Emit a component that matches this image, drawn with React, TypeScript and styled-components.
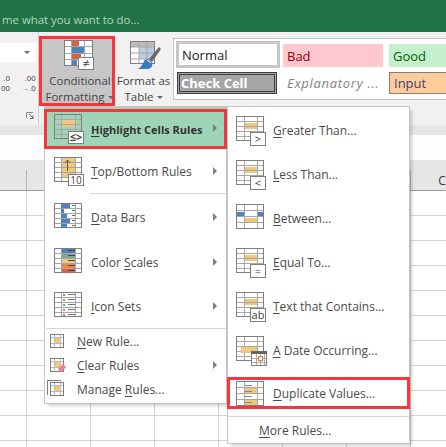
import React from 'react';
import styled, { createGlobalStyle } from 'styled-components';

const GlobalStyle = createGlobalStyle`
  html, body { margin: 0; padding: 0; background: #fff; }
  body { font-family: "Open Sans", "Noto Sans", "Liberation Sans", sans-serif; }
`;

const red = '#f9343c';
const gridLine = '#7f7f7f';
const cellLine = '#a6a6a6';
const amber = '#efc77d';
const blue = '#4f81bd';

const Page = styled.div`
  position: relative;
  width: 446px;
  height: 447px;
  overflow: hidden;
  display: flex;
  flex-direction: column;
`;

const TitleBar = styled.div`
  height: 32px;
  flex: none;
  background: #217346;
  color: #b4d6c3;
  font-size: 11.4px;
  line-height: 40px;
  padding-left: 2px;
  white-space: nowrap;
`;

const Ribbon = styled.div`
  height: 93px;
  flex: none;
  display: flex;
  background: #f1f1f1;
  overflow: hidden;
`;

const NumberGroup = styled.div`
  width: 39px;
  flex: none;
  border-right: 1px solid #cfcfcf;
  display: flex;
  flex-direction: column;
  padding-top: 11px;
  box-sizing: border-box;
`;

const FormatSelect = styled.div`
  width: 36px;
  height: 19px;
  background: #fff;
  display: flex;
  align-items: center;
  justify-content: flex-end;
  padding-right: 6px;
  box-sizing: border-box;
`;

const Caret = styled.span`
  display: inline-block;
  width: 0;
  height: 0;
  border-left: 3px solid transparent;
  border-right: 3px solid transparent;
  border-top: 3px solid #666;
`;

const Decimals = styled.div`
  display: flex;
  gap: 11px;
  margin-top: 12px;
  padding-left: 1px;
`;

const DecimalStack = styled.div`
  display: flex;
  flex-direction: column;
  align-items: flex-end;
  font-family: "Liberation Sans", sans-serif;
  font-size: 8px;
  line-height: 10px;
  color: #444;
  white-space: nowrap;
`;

const DecimalArrow = styled.span`
  color: #2e75b6;
`;

const Launcher = styled.svg`
  margin: auto 4px 6px auto;
`;

const RibbonButton = styled.div<{ $active?: boolean; $width: number }>`
  position: relative;
  width: ${p => p.$width}px;
  height: 70px;
  margin-top: 4px;
  flex: none;
  box-sizing: border-box;
  background: ${p => (p.$active ? '#c6c6c6' : 'transparent')};
  border: ${p => (p.$active ? `3px solid ${red}` : '0')};
  display: flex;
  flex-direction: column;
  align-items: center;
  color: #444;
  font-size: 11.5px;
  line-height: 16px;
  white-space: nowrap;
`;

const RibbonIcon = styled.svg<{ $top: number; $left: number }>`
  margin: ${p => p.$top}px 0 0 ${p => p.$left}px;
  flex: none;
`;

const RibbonLabel = styled.div<{ $top?: number; $left?: number }>`
  display: flex;
  align-items: center;
  gap: 3px;
  margin-top: ${p => p.$top || 0}px;
  margin-left: ${p => p.$left || 0}px;
`;

const Gallery = styled.div`
  width: 280px;
  height: 62px;
  margin: 6px 0 0 1px;
  flex: none;
  box-sizing: border-box;
  background: #fff;
  border: 1px solid #c4c4c4;
  padding: 2px 0 0 2px;
  display: grid;
  grid-template-columns: 104px 103px 70px;
  grid-template-rows: 27px 22px;
  column-gap: 3px;
  row-gap: 4px;
`;

const styleTones = {
  normal: 'background:#fff;border:3px solid #c6c6c6;color:#222;padding-left:3px;',
  bad: 'background:#ffc7ce;color:#9c0006;margin:3px 3px 1px 0;padding-left:4px;',
  good: 'background:#c6efce;color:#006100;margin:3px 0 1px 0;padding-left:4px;',
  check: 'background:#a5a5a5;border:3px double #3f3f3f;color:#fff;font-weight:700;margin:0 3px 0 1px;padding-left:1px;',
  note: 'color:#7f7f7f;font-style:italic;padding-left:4px;letter-spacing:.7px;',
  input: 'background:#fc9;border:1px solid #7f7f7f;color:#3f3f76;padding-left:4px;',
};

const StyleCell = styled.div<{ $tone: keyof typeof styleTones }>`
  box-sizing: border-box;
  display: flex;
  align-items: center;
  font-size: 13px;
  white-space: nowrap;
  overflow: hidden;
  ${p => styleTones[p.$tone]}
`;

const Band = styled.div`
  height: 10px;
  flex: none;
  background: #e6e6e6;
`;

const FormulaBar = styled.div`
  height: 25px;
  flex: none;
  background: #fdfdfd;
`;

const ColumnHeader = styled.div`
  height: 31px;
  flex: none;
  box-sizing: border-box;
  background: #e6e6e6;
  border-bottom: 1px solid #9b9b9b;
  padding-left: 26px;
  display: flex;
`;

const ColumnCell = styled.div`
  width: 64px;
  flex: none;
  position: relative;
  color: #333;
  font-size: 12px;
  line-height: 16px;
  padding-top: 13px;
  text-align: center;
  &::before {
    content: '';
    position: absolute;
    left: 0;
    bottom: 0;
    height: 20px;
    width: 1px;
    background: #b5b5b5;
  }
`;

const SheetBody = styled.div`
  flex: 1;
  background-color: #fff;
  background-image:
    linear-gradient(to top, #d2d2d2 1px, transparent 1px),
    linear-gradient(to left, #d2d2d2 1px, transparent 1px);
  background-size: 64px 25px;
  background-position: -37px 0;
`;

const Menu = styled.div<{ $left: number; $top: number; $height: number }>`
  position: absolute;
  left: ${p => p.$left}px;
  top: ${p => p.$top}px;
  width: 181px;
  height: ${p => p.$height}px;
  background: #fff;
  box-shadow: 0 0 0 1px #c6c6c6, 3px 3px 3px rgba(0, 0, 0, 0.18);
  display: flex;
  flex-direction: column;
  color: #4a4a4a;
  font-size: 12px;
  font-weight: 500;
  white-space: nowrap;
`;

const Row = styled.div<{ $height: number; $pad: number; $gap: number; $top?: number; $green?: boolean; $bold?: boolean }>`
  position: relative;
  height: ${p => p.$height}px;
  flex: none;
  box-sizing: border-box;
  display: flex;
  align-items: center;
  padding-left: ${p => p.$pad}px;
  padding-top: ${p => p.$top || 0}px;
  gap: ${p => p.$gap}px;
  background: ${p => (p.$green ? '#9fd5b7' : 'transparent')};
  font-weight: ${p => (p.$bold ? 700 : 'inherit')};
  font-size: ${p => (p.$bold ? '11px' : 'inherit')};
  color: ${p => (p.$bold ? '#333' : 'inherit')};
`;

const RedFrame = styled.div<{ $top: number }>`
  position: absolute;
  left: -1px;
  right: -1px;
  top: ${p => p.$top}px;
  bottom: 0;
  border: 3px solid ${red};
`;

const Key = styled.u`
  text-underline-offset: 2px;
  text-decoration-thickness: 1px;
`;

const SubArrow = styled.span`
  position: absolute;
  right: 9px;
  top: 50%;
  margin-top: -4px;
  width: 0;
  height: 0;
  border-top: 4px solid transparent;
  border-bottom: 4px solid transparent;
  border-left: 4px solid #7f7f7f;
`;

const Separator = styled.div<{ $inset: number }>`
  height: 1px;
  flex: none;
  margin-left: ${p => p.$inset}px;
  background: #d6d6d6;
`;

const Gap = styled.div<{ $height: number }>`
  height: ${p => p.$height}px;
  flex: none;
`;

// plain sheet drawn behind most of the menu icons
const Cells = ({ x = 0.5, y = 1.5, w = 27, h = 24, cols = [7, 21], rows = [5, 10, 15, 20] }: any) => (
  <g fill="none">
    {cols.map((c: number) => <path key={c} d={`M${x + c} ${y}v${h}`} stroke={cellLine} />)}
    {rows.map((r: number) => <path key={r} d={`M${x} ${y + r}h${w}`} stroke={cellLine} />)}
    <rect x={x} y={y} width={w} height={h} stroke={gridLine} />
  </g>
);

const Badge = ({ x, y, w = 16, h = 13, children }: any) => (
  <g>
    <rect x={x + 0.5} y={y + 0.5} width={w - 1} height={h - 1} fill="#fff" stroke={gridLine} />
    {children}
  </g>
);

const BadgeText = styled.text<{ $size: number }>`
  font-family: "Open Sans", "DejaVu Sans", sans-serif;
  font-size: ${p => p.$size}px;
  fill: #444;
  text-anchor: middle;
`;

const Icon = ({ children, w = 32, h = 30 }: any) => (
  <svg width={w} height={h} viewBox={`0 0 ${w} ${h}`} style={{ flex: 'none' }} shapeRendering="crispEdges">{children}</svg>
);

const HighlightIcon = () => (
  <Icon>
    <rect x="7" y="6" width="14" height="7" fill={amber} />
    <Cells y={0.5} />
    <Badge x={14} y={17}>
      <BadgeText $size={11} x={22} y={27}>≤&gt;</BadgeText>
    </Badge>
  </Icon>
);

const TopBottomIcon = () => (
  <Icon>
    <rect x="7" y="2" width="14" height="19" fill={amber} />
    <Cells />
    <path d="M13.5 4v11M10.5 7l3-3 3 3" stroke="#555" fill="none" shapeRendering="auto" />
    <Badge x={14} y={18} h={12}>
      <BadgeText $size={10} x={22} y={28}>10</BadgeText>
    </Badge>
  </Icon>
);

const DataBarsIcon = () => (
  <Icon>
    <Cells />
    {[[9, 2], [3, 7], [6, 12], [9, 17], [6, 22]].map(([w, y]) => (
      <g key={y}>
        <rect x="7" y={y} width={w} height="4" fill={blue} />
        <path d={`M18 ${y + 1.5}h3`} stroke="#666" />
      </g>
    ))}
  </Icon>
);

const ColorScalesIcon = () => (
  <Icon>
    <Cells />
    {['#4f81bd', '#79ab94', '#efc77d', '#e98b46', '#d8613f'].map((c, i) => (
      <g key={c}>
        <rect x="8" y={2 + i * 5} width="13" height="4" fill={c} />
        <path d={`M14 ${3.5 + i * 5}h7`} stroke="#444" />
      </g>
    ))}
  </Icon>
);

const IconSetsIcon = () => (
  <Icon>
    <Cells />
    {['#5ba99a', '#e8813a', '#5ba99a', '#e8813a', '#5ba99a'].map((c, i) => (
      <g key={i}>
        <rect x="9" y={3 + i * 5} width="2" height="2" fill={c} />
        <path d={`M14 ${3.5 + i * 5}h7`} stroke="#777" />
      </g>
    ))}
  </Icon>
);

const SmallIcon = ({ eraser, stack }: { eraser?: boolean; stack?: boolean }) => (
  <Icon w={21} h={18}>
    {stack && <path d="M0.5 15V0.5H14" stroke={gridLine} fill="none" />}
    <rect x="7" y="6" width="6" height="5" fill={amber} />
    <path d="M4 5.5h13M4 11.5h13M7.5 3v13M13.5 3v13" stroke="#bbb" fill="none" />
    <rect x="3.5" y="2.5" width="13" height="13" fill="none" stroke={gridLine} />
    {eraser && <path d="M11 13l5-5 3 3-4 5h-2z" fill="#ea7f95" shapeRendering="auto" />}
  </Icon>
);

const CompareIcon = ({ sign }: { sign: string }) => (
  <Icon h={32}>
    <rect x="8" y="9" width="14" height="6" fill={amber} />
    <Cells y={2.5} cols={[8, 21]} />
    <Badge x={14} y={18} h={14}>
      <BadgeText $size={11} x={22} y={29}>{sign}</BadgeText>
    </Badge>
  </Icon>
);

const BetweenIcon = () => (
  <Icon h={32}>
    <rect x="1" y="10" width="7" height="5" fill={blue} />
    <rect x="22" y="10" width="5" height="5" fill={blue} />
    <rect x="9" y="16" width="12" height="5" fill={amber} />
    <Cells y={2.5} cols={[8, 21]} rows={[6, 12, 18]} />
  </Icon>
);

const DateIcon = () => (
  <Icon h={32}>
    <Cells y={2.5} cols={[8, 21]} />
    <rect x="5" y="13" width="16" height="6" fill={amber} />
    <rect x="15.5" y="17.5" width="15" height="14" fill="#fff" stroke={gridLine} />
    <rect x="15" y="17" width="16" height="3" fill="#666" />
    <path d="M16 24h14M16 28h14M20 20v11M24 20v11M28 20v11" stroke="#aaa" />
    <rect x="22.5" y="22.5" width="4" height="4" fill="#fff" stroke="#e8712a" />
  </Icon>
);

const DuplicateIcon = () => (
  <Icon w={32} h={26}>
    <rect x="9" y="7" width="13" height="7" fill={amber} />
    <rect x="9" y="20" width="13" height="5" fill={amber} />
    <Cells y={1.5} cols={[8, 21]} rows={[6, 12, 18]} />
    {[5, 11, 16, 22].map(y => <path key={y} d={`M9 ${y}h7`} stroke="#888" />)}
  </Icon>
);

export default function App() {
  return (
    <Page>
      <GlobalStyle />
      <TitleBar>me what you want to do...</TitleBar>
      <Ribbon>
        <NumberGroup>
          <FormatSelect><Caret /></FormatSelect>
          <Decimals>
            <DecimalStack>
              <span>.0</span>
              <span>00</span>
            </DecimalStack>
            <DecimalStack>
              <span>.00</span>
              <span><DecimalArrow>→</DecimalArrow>.0</span>
            </DecimalStack>
          </Decimals>
          <Launcher width="8" height="7" viewBox="0 0 8 7">
            <path d="M0.5 6V0.5H7" stroke="#888" fill="none" />
            <path d="M3 2l4 4M7 3.5V6.5H4" stroke="#666" fill="none" />
          </Launcher>
        </NumberGroup>
        <RibbonButton $active $width={76}>
          <RibbonIcon $top={1} $left={6} width="32" height="32" viewBox="0 0 32 32" shapeRendering="crispEdges">
            <rect x="1" y="1" width="27" height="25" fill="#fff" />
            <rect x="8" y="1" width="7" height="5" fill="#d8613f" />
            <rect x="8" y="7" width="12" height="6" fill={blue} />
            <rect x="8" y="14" width="9" height="5" fill="#d8613f" />
            <rect x="8" y="20" width="5" height="6" fill={blue} />
            <path d="M7.5 1v25M20.5 1v25M1 6.5h27M1 13.5h27M1 19.5h27" stroke={cellLine} />
            <rect x="0.5" y="0.5" width="28" height="25" fill="none" stroke={gridLine} />
            <rect x="14.5" y="17.5" width="15" height="12" fill="#fff" stroke={gridLine} />
            <BadgeText $size={13} x={22} y={28}>≠</BadgeText>
          </RibbonIcon>
          <RibbonLabel $top={1} $left={6}>Conditional</RibbonLabel>
          <RibbonLabel $left={5}>Formatting <Caret /></RibbonLabel>
        </RibbonButton>
        <RibbonButton $width={57}>
          <RibbonIcon $top={5} $left={4} width="32" height="32" viewBox="0 0 32 32">
            <rect x="1" y="1" width="24" height="22" fill="#fff" />
            <rect x="1" y="1" width="24" height="5" fill="#bcbcbc" />
            <rect x="9" y="6" width="16" height="12" fill="#b8cce4" />
            <path d="M9 1v22M17 1v22M1 6h24M1 12h24M1 18h24" stroke="#a8a8a8" fill="none" />
            <rect x="0.5" y="0.5" width="24" height="22" fill="none" stroke={gridLine} />
            <path d="M29 6l-10 12 3 3 9-13z" fill="#666" />
            <path d="M18 18c-4 0-4 3-6 6-1 2-3 3-4 4h10c4-1 5-4 4-7z" fill="#3d7ab8" />
            <path d="M17 19l4 3" stroke="#fff" />
          </RibbonIcon>
          <RibbonLabel>Format as</RibbonLabel>
          <RibbonLabel>Table <Caret /></RibbonLabel>
        </RibbonButton>
        <Gallery>
          <StyleCell $tone="normal">Normal</StyleCell>
          <StyleCell $tone="bad">Bad</StyleCell>
          <StyleCell $tone="good">Good</StyleCell>
          <StyleCell $tone="check">Check Cell</StyleCell>
          <StyleCell $tone="note">Explanatory ...</StyleCell>
          <StyleCell $tone="input">Input</StyleCell>
        </Gallery>
      </Ribbon>
      <Band />
      <FormulaBar />
      <ColumnHeader>
        {['', '', '', '', '', '', 'C'].map((label, i) => <ColumnCell key={i}>{label}</ColumnCell>)}
      </ColumnHeader>
      <SheetBody />

      <Menu $left={45} $top={107} $height={296}>
        <Row $height={42} $pad={9} $gap={5} $top={2} $green $bold>
          <HighlightIcon />
          <span><Key>H</Key>ighlight Cells Rules</span>
          <SubArrow />
          <RedFrame $top={2} />
        </Row>
        <Row $height={44} $pad={9} $gap={5}>
          <TopBottomIcon />
          <span><Key>T</Key>op/Bottom Rules</span>
          <SubArrow />
        </Row>
        <Separator $inset={45} />
        <Row $height={46} $pad={9} $gap={5}>
          <DataBarsIcon />
          <span><Key>D</Key>ata Bars</span>
          <SubArrow />
        </Row>
        <Row $height={44} $pad={9} $gap={5}>
          <ColorScalesIcon />
          <span>Color <Key>S</Key>cales</span>
          <SubArrow />
        </Row>
        <Row $height={44} $pad={9} $gap={5}>
          <IconSetsIcon />
          <span><Key>I</Key>con Sets</span>
          <SubArrow />
        </Row>
        <Separator $inset={1} />
        <Row $height={24} $pad={2} $gap={9}>
          <SmallIcon />
          <span><Key>N</Key>ew Rule...</span>
        </Row>
        <Row $height={24} $pad={2} $gap={9}>
          <SmallIcon eraser />
          <span><Key>C</Key>lear Rules</span>
          <SubArrow />
        </Row>
        <Row $height={24} $pad={2} $gap={9}>
          <SmallIcon stack />
          <span>Manage <Key>R</Key>ules...</span>
        </Row>
      </Menu>

      <Menu $left={228} $top={107} $height={336}>
        <Row $height={45} $pad={8} $gap={5} $top={1}>
          <CompareIcon sign=">" />
          <span><Key>G</Key>reater Than...</span>
        </Row>
        <Row $height={44} $pad={8} $gap={5}>
          <CompareIcon sign="<" />
          <span><Key>L</Key>ess Than...</span>
        </Row>
        <Row $height={44} $pad={8} $gap={5}>
          <BetweenIcon />
          <span><Key>B</Key>etween...</span>
        </Row>
        <Row $height={44} $pad={8} $gap={5}>
          <CompareIcon sign="=" />
          <span><Key>E</Key>qual To...</span>
        </Row>
        <Row $height={44} $pad={8} $gap={5}>
          <CompareIcon sign="ab" />
          <span><Key>T</Key>ext that Contains...</span>
        </Row>
        <Row $height={44} $pad={8} $gap={5}>
          <DateIcon />
          <span><Key>A</Key> Date Occurring...</span>
        </Row>
        <Gap $height={5} />
        <Row $height={32} $pad={8} $gap={5}>
          <DuplicateIcon />
          <span><Key>D</Key>uplicate Values...</span>
          <RedFrame $top={0} />
        </Row>
        <Gap $height={7} />
        <Separator $inset={0} />
        <Row $height={26} $pad={31} $gap={0}>
          <span><Key>M</Key>ore Rules...</span>
        </Row>
      </Menu>
    </Page>
  );
}
